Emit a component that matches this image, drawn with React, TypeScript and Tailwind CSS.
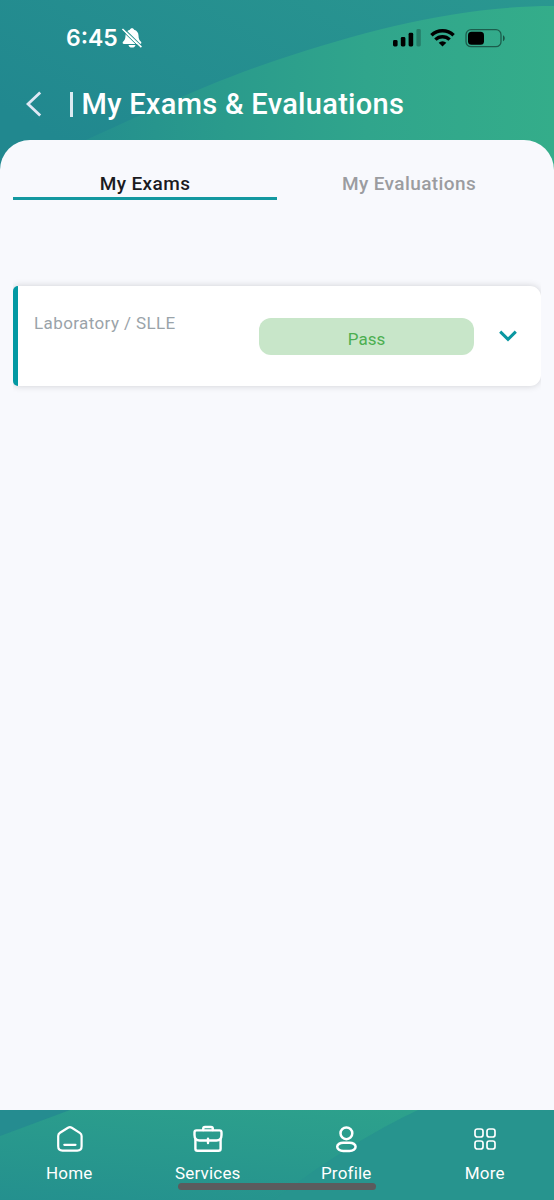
import React, { useState } from 'react';

type TabKey = 'exams' | 'evaluations';

interface Exam {
    title: string;
    result: string;
}

const tabs: { key: TabKey; label: string }[] = [
    { key: 'exams', label: 'My Exams' },
    { key: 'evaluations', label: 'My Evaluations' },
];

const exams: Exam[] = [{ title: 'Laboratory / SLLE', result: 'Pass' }];

const HeaderBackdrop: React.FC = () => (
    <svg className="absolute inset-0 h-full w-full" viewBox="0 0 554 180" preserveAspectRatio="none" aria-hidden="true">
        <defs>
            <linearGradient id="headBase" x1="0" y1="0.6" x2="1" y2="0">
                <stop offset="0" stopColor="#21888f" />
                <stop offset="1" stopColor="#2a9790" />
            </linearGradient>
            <linearGradient id="headWave" x1="0" y1="0" x2="1" y2="0">
                <stop offset="0" stopColor="#248f8e" />
                <stop offset="0.3" stopColor="#2a9b8c" />
                <stop offset="0.6" stopColor="#30a58c" />
                <stop offset="1" stopColor="#34ad8a" />
            </linearGradient>
        </defs>
        <rect width="554" height="180" fill="url(#headBase)" />
        <path d="M86 140C140 116 200 86 277 60C370 29 460 6 554 6V180H86Z" fill="url(#headWave)" />
    </svg>
);

const StatusBar: React.FC = () => (
    <div className="relative flex h-[76px] items-center justify-between pl-[66px] pr-[48px]">
        <div className="flex items-center gap-1 text-white">
            <span className="font-[Inter,sans-serif] text-[23px] font-semibold leading-none">6:45</span>
            <svg width="20" height="20" viewBox="0 0 20 20" fill="none" aria-hidden="true">
                <path d="M10 .2c-1.100 0-1.900.7-2.100 1.600C5.100 2.600 3.500 4.900 3.500 7.600c0 3.600-1.100 4.900-2.500 6.200-.8.800-.3 2.200 1 2.200h16c1.300 0 1.800-1.400 1-2.200-1.400-1.300-2.500-2.600-2.500-6.200 0-2.700-1.600-5-4.400-5.800C11.900.9 11.100.2 10 .2ZM6.500 16.900h7c-.3 1.600-1.600 2.600-3.500 2.600s-3.200-1-3.500-2.600Z" fill="currentColor" />
                <path d="M1.400 0 20 18.300" stroke="#25908f" strokeWidth="1.100" />
                <path d="M.4 1 19.400 19.200" stroke="currentColor" strokeWidth="1.600" />
                <path d="M-.4 2 18 20" stroke="#25908f" strokeWidth="1" />
            </svg>
        </div>
        <div className="flex items-center">
            <svg width="29" height="18" viewBox="0 0 29 18" aria-hidden="true">
                <rect x="1" y="11" width="4.600" height="6.500" rx="1.400" />
                <rect x="8.800" y="8" width="4.600" height="9.500" rx="1.400" />
                <rect x="16.600" y="3.800" width="4.600" height="13.700" rx="1.400" />
                <rect x="24.400" y="0" width="4.400" height="17.500" rx="1.400" fillOpacity="0.250" />
            </svg>
            <svg className="ml-[9px]" width="25" height="18" viewBox="0 0 25 18" fill="none" stroke="#000" strokeWidth="3.400" aria-hidden="true">
                <path d="M1.400 6.200a16 16 0 0 1 22.200 0" />
                <path d="M5.400 10.600a10.200 10.200 0 0 1 14.200 0" />
                <path d="m12.500 17.500-3.800-3.700a5.400 5.400 0 0 1 7.600 0Z" fill="#000" stroke="none" />
            </svg>
            <svg className="ml-[10px]" width="41" height="19" viewBox="0 0 41 19" aria-hidden="true">
                <rect x="1" y="0.700" width="35" height="17" rx="5" fill="none" stroke="#000" strokeOpacity="0.450" strokeWidth="1.300" />
                <rect x="3" y="2.700" width="16" height="13" rx="3.500" />
                <path d="M38 6.200c2.300.8 2.300 5.200 0 6Z" fillOpacity="0.500" />
            </svg>
        </div>
    </div>
);

const ExamCard: React.FC<{ exam: Exam }> = ({ exam }) => {
    const [open, setOpen] = useState(false);

    return (
        <div className="flex h-[100px] rounded-l-[5px] rounded-r-[11px] border-l-[5px] border-[#0399a3] bg-white shadow-[0_0_7px_rgba(0,0,0,0.17)]">
            <div className="w-[241px] pl-4 pt-[25px] text-[17px] leading-6 tracking-[0.4px] text-[#9aa3a9]">{exam.title}</div>
            <div className="mt-[32px] h-[37px] w-[215px] rounded-[12px] bg-[#c8e6c9] pt-[9px] text-center text-[17px] leading-6 text-[#4caf50]">
                {exam.result}
            </div>
            <button type="button" className="flex flex-1 items-center justify-center" aria-label="Toggle details" onClick={() => setOpen(!open)}>
                <svg width="18" height="12" viewBox="0 0 18 12" fill="none" stroke="#0a97a1" strokeWidth="3" aria-hidden="true">
                    <path d="m1.200 1.600 7.800 7.800 7.800-7.800" />
                </svg>
            </button>
        </div>
    );
};

const HomeIcon = () => (
    <svg width="28" height="28" viewBox="0 0 28 28" fill="none" stroke="currentColor" strokeWidth="2.200" strokeLinecap="round" strokeLinejoin="round">
        <path d="M13 2.700 5 7.800Q3.200 9 3.200 11V21.300Q3.200 25.600 7.500 25.600H22.300Q26.600 25.600 26.600 21.300V11Q26.600 9 24.800 7.800L16.800 2.700Q14.900 1.600 13 2.700Z" />
        <path d="M9.300 19.800H20.500" />
    </svg>
);

const ServicesIcon = () => (
    <svg width="30" height="28" viewBox="0 0 30 28" fill="none" stroke="currentColor" strokeWidth="2.400" strokeLinecap="round" strokeLinejoin="round">
        <path d="M10.200 5V3.800Q10.200 2 12 2H18Q19.800 2 19.800 3.800V5" />
        <path d="M3.500 5.400H26.500Q28.500 5.400 28.500 7.400V10Q28.500 15.500 23.500 15.500H6.500Q1.500 15.500 1.500 10V7.400Q1.500 5.400 3.500 5.400Z" />
        <path d="M2.400 14.500V23.800Q2.400 25.800 4.400 25.800H25.600Q27.600 25.800 27.600 23.800V14.500M15 13.600V18" />
    </svg>
);

const ProfileIcon = () => (
    <svg width="28" height="28" viewBox="0 0 28 28" fill="none" stroke="currentColor" strokeWidth="2.500">
        <circle cx="14.400" cy="8.300" r="5.900" />
        <rect x="5.200" y="17.700" width="18.400" height="8.200" rx="6" ry="4.100" />
    </svg>
);

const MoreIcon = () => (
    <svg width="28" height="28" viewBox="0 0 28 28" fill="none" stroke="currentColor" strokeWidth="1.700">
        <rect x="4" y="4" width="8" height="8" rx="2.300" />
        <rect x="16" y="4" width="8" height="8" rx="2.300" />
        <rect x="4" y="16" width="8" height="8" rx="2.300" />
        <rect x="16" y="16" width="8" height="8" rx="2.300" />
    </svg>
);

const navItems = [
    { label: 'Home', icon: HomeIcon },
    { label: 'Services', icon: ServicesIcon },
    { label: 'Profile', icon: ProfileIcon },
    { label: 'More', icon: MoreIcon },
];

const BottomNav: React.FC = () => (
    <nav className="relative h-[90px] overflow-hidden">
        <svg className="absolute inset-0" width="554" height="90" viewBox="0 0 554 90" aria-hidden="true">
            <defs>
                <linearGradient id="navBase" x1="0" y1="1" x2="0.700" y2="0">
                    <stop offset="0" stopColor="#24908e" />
                    <stop offset="1" stopColor="#2da18c" />
                </linearGradient>
            </defs>
            <rect width="554" height="90" fill="url(#navBase)" />
            <path d="M0 0H70L0 26Z" fill="#258c90" />
            <path d="M418 0C375 20 325 51 274 90H554V0Z" fill="#27948e" />
        </svg>
        <div className="relative grid grid-cols-4 pt-[15px] text-white">
            {navItems.map(({ label, icon: Icon }) => (
                <a key={label} href="#" className="flex flex-col items-center">
                    <Icon />
                    <span className="mt-[8px] text-[17px] leading-6 tracking-[0.2px]">{label}</span>
                </a>
            ))}
        </div>
        {/* system home indicator */}
        <div className="absolute left-[178px] top-[73px] h-[7px] w-[198px] rounded-full bg-[#5b5b5d]" />
    </nav>
);

const App: React.FC = () => {
    const [active, setActive] = useState<TabKey>('exams');

    return (
        <div className="flex h-[1200px] w-[554px] flex-col overflow-hidden bg-[#f8f9fd] font-[Roboto,sans-serif]">
            <header className="relative h-[180px] shrink-0">
                <HeaderBackdrop />
                <StatusBar />
                <div className="relative flex h-[56px] items-center pl-[26px] text-white">
                    <svg width="16" height="26" viewBox="0 0 16 26" fill="none" stroke="#dfe8f5" strokeWidth="2.800" aria-hidden="true">
                        <path d="M14.200 1.500 2 13l12.200 11.500" />
                    </svg>
                    <div className="ml-[28px] h-[25px] w-[2.5px] bg-[#dcebf2]" />
                    <h1 className="ml-[9px] whitespace-nowrap text-[29px] font-medium leading-9 tracking-[0.3px]">My Exams &amp; Evaluations</h1>
                </div>
            </header>
            <main className="relative -mt-10 flex-1 rounded-t-[30px] bg-[#f8f9fd] px-[13px] pt-[30px]">
                <div className="grid grid-cols-2">
                    {tabs.map((tab) => (
                        <button
                            key={tab.key}
                            type="button"
                            onClick={() => setActive(tab.key)}
                            className={`h-[30px] border-b-[3px] text-[19px] font-medium leading-[27px] tracking-[0.4px] ${
                                active === tab.key ? 'border-[#1398a0] text-[#1b1b1f]' : 'border-transparent text-[#9b9ca0]'
                            }`}
                        >
                            {tab.label}
                        </button>
                    ))}
                </div>
                <div className="overflow-hidden pb-3 pt-[86px]">
                    {exams.map((exam) => (
                        <ExamCard key={exam.title} exam={exam} />
                    ))}
                </div>
            </main>
            <BottomNav />
        </div>
    );
};

export default App;
